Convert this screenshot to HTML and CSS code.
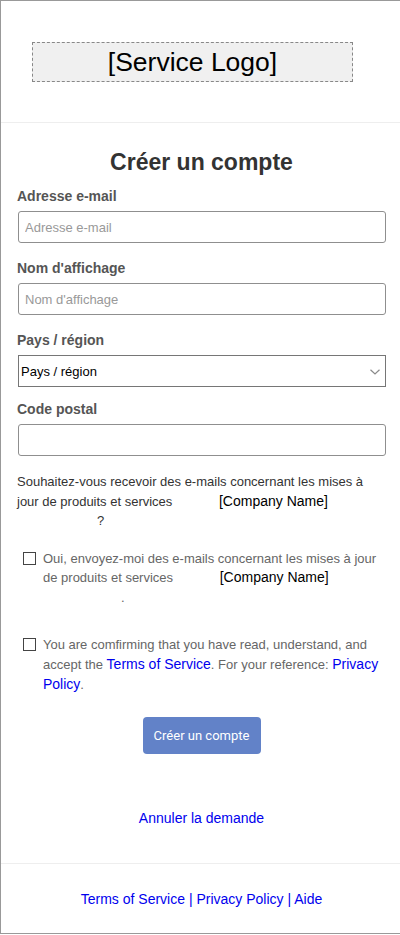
FILE: index.html
```html
<!DOCTYPE html>
<html lang="fr">
<head>
<meta charset="utf-8">
<title>Créer un compte</title>
<link rel="stylesheet" href="styles.css">
</head>
<body>
<div class="page">
  <header class="header">
    <div class="logo">[Service Logo]</div>
  </header>
  <main class="form">
    <h1 class="title">Créer un compte</h1>
    <div class="field">
      <label class="label" for="email">Adresse e-mail</label>
      <input class="input" id="email" type="text" placeholder="Adresse e-mail">
    </div>
    <div class="field">
      <label class="label" for="name">Nom d'affichage</label>
      <input class="input" id="name" type="text" placeholder="Nom d'affichage">
    </div>
    <div class="field field-select">
      <label class="label" for="country">Pays / région</label>
      <div class="select-wrap">
        <select class="select" id="country"><option>Pays / région</option></select>
        <svg class="chevron" width="10" height="6" viewBox="0 0 10 6" aria-hidden="true"><path d="M0.5 0.8 L5 5 L9.5 0.8" fill="none" stroke="#8a8a8a" stroke-width="1.2"/></svg>
      </div>
    </div>
    <div class="field field-last">
      <label class="label" for="zip">Code postal</label>
      <input class="input" id="zip" type="text">
    </div>
    <p class="question">Souhaitez-vous recevoir des e-mails concernant les mises à jour de produits et services <span class="company">[Company Name]</span><span class="tail">?</span></p>
    <label class="check">
      <input class="check-box" type="checkbox">
      <span class="check-text">Oui, envoyez-moi des e-mails concernant les mises à jour de produits et services <span class="company">[Company Name]</span><span class="tail tail-dot">.</span></span>
    </label>
    <label class="check terms">
      <input class="check-box" type="checkbox">
      <span class="check-text">You are comfirming that you have read, understand, and accept the <a class="link terms-link" href="#">Terms of Service</a>. For your reference: <a class="link terms-link" href="#">Privacy Policy</a>.</span>
    </label>
    <div class="actions">
      <button class="btn" type="button">Créer un compte</button>
    </div>
    <div class="cancel"><a class="link" href="#">Annuler la demande</a></div>
  </main>
  <footer class="footer">
    <a class="link" href="#">Terms of Service</a> | <a class="link" href="#">Privacy Policy</a> | <a class="link" href="#">Aide</a>
  </footer>
</div>
</body>
</html>
```
FILE: styles.css
```css
html, body {
  margin: 0;
  padding: 0;
  background: #fff;
}

body {
  font-family: "Liberation Sans", Arial, sans-serif;
  color: #333;
}

.page {
  width: 400px;
  box-sizing: border-box;
  border: 1px solid #999;
  border-right: 0;
}

.header {
  padding: 41px 0 40px 31px;
  border-bottom: 1px solid #eee;
}

.logo {
  width: 321px;
  height: 40px;
  box-sizing: border-box;
  border: 1px dashed #888;
  background: #f0f0f0;
  display: flex;
  align-items: center;
  justify-content: center;
  font-size: 26.5px;
  color: #000;
}

.form {
  padding: 26px 14px 37px 16px;
  border-bottom: 1px solid #eee;
}

.title {
  margin: 0 0 13px;
  font-size: 23px;
  line-height: 26px;
  font-weight: bold;
  text-align: center;
  color: #333;
}

.field {
  margin-bottom: 17px;
}

.field-select {
  margin-bottom: 14px;
}

.field-last {
  margin-bottom: 16px;
}

.label {
  display: block;
  font-size: 14px;
  line-height: 17px;
  font-weight: bold;
  color: #555;
  margin-bottom: 6px;
}

.input {
  display: block;
  box-sizing: border-box;
  width: 368px;
  height: 32px;
  margin: 0 0 0 1px;
  padding: 0 6px;
  border: 1px solid #8f8f8f;
  border-radius: 3px;
  font-family: "Liberation Sans", Arial, sans-serif;
  font-size: 13px;
  color: #000;
  background: #fff;
}

.input::placeholder {
  color: #999;
}

.select-wrap {
  position: relative;
  width: 368px;
  margin-left: 1px;
}

.select {
  appearance: none;
  -webkit-appearance: none;
  display: block;
  box-sizing: border-box;
  width: 368px;
  height: 32px;
  margin: 0;
  padding: 0 20px 0 2px;
  border: 1px solid #767676;
  border-radius: 0;
  font-family: "Liberation Sans", Arial, sans-serif;
  font-size: 13px;
  color: #000;
  background: #fff;
}

.chevron {
  position: absolute;
  right: 6px;
  top: 14px;
  pointer-events: none;
}

.question {
  margin: 0 0 18px;
  font-size: 13px;
  line-height: 19.5px;
  color: #333;
}

.company {
  display: inline-block;
  margin-left: 43px;
  font-size: 14px;
  line-height: 16px;
  color: #000;
}

.tail {
  display: block;
  padding-left: 80px;
}

.tail-dot {
  padding-left: 78px;
}

.check {
  display: flex;
  align-items: flex-start;
  padding-left: 2px;
  margin-bottom: 28px;
  font-size: 13px;
  line-height: 19.5px;
  color: #666;
}

.check-box {
  appearance: none;
  -webkit-appearance: none;
  flex: none;
  box-sizing: border-box;
  width: 13px;
  height: 13px;
  margin: 3px 7px 0 4px;
  border: 1px solid #444;
  border-radius: 0;
  background: #fff;
}

.check-text {
  flex: 1;
}

.terms {
  margin-bottom: 22px;
  line-height: 20px;
}

.terms-link {
  font-size: 14px;
  line-height: 16px;
}

.link {
  color: #0000ee;
  text-decoration: none;
}

.actions {
  display: flex;
  justify-content: center;
}

.btn {
  width: 118px;
  height: 37px;
  border: 0;
  border-radius: 4px;
  background: #6282c8;
  color: #fff;
  font-family: Roboto, "Noto Sans", sans-serif;
  font-size: 13px;
  padding: 0;
}

.cancel {
  margin-top: 56px;
  text-align: center;
  font-size: 14px;
  line-height: 16px;
}

.footer {
  padding: 27px 14px 26px 16px;
  text-align: center;
  font-size: 14px;
  line-height: 16px;
  color: #0000ee;
}
```
